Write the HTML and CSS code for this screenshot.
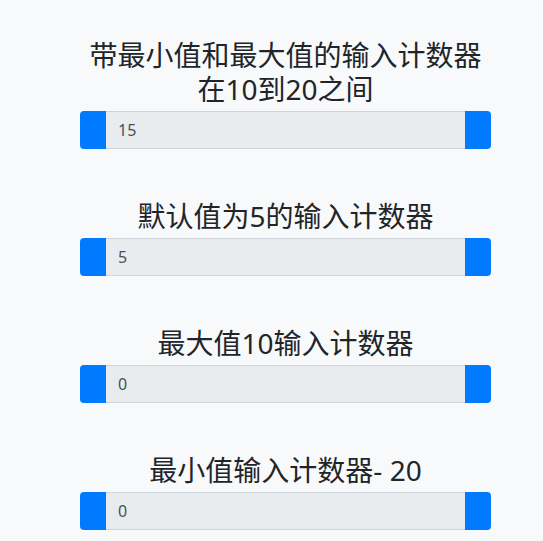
FILE: index.html
```html
<!DOCTYPE html>
<html lang="zh">
<head>
    <meta charset="UTF-8">
    <meta name="viewport" content="width=device-width, initial-scale=1.0">
    <title>输入计数器</title>
    <link rel="stylesheet" href="styles.css">
</head>
<body>
    <div class="container">
        <div class="counter">
            <h3>带最小值和最大值的输入计数器<br>在10到20之间</h3>
            <div class="input-group">
                <button class="btn-step btn-minus"></button>
                <input type="text" class="count-input" value="15" readonly>
                <button class="btn-step btn-plus"></button>
            </div>
        </div>
        <div class="counter">
            <h3>默认值为5的输入计数器</h3>
            <div class="input-group">
                <button class="btn-step btn-minus"></button>
                <input type="text" class="count-input" value="5" readonly>
                <button class="btn-step btn-plus"></button>
            </div>
        </div>
        <div class="counter">
            <h3>最大值10输入计数器</h3>
            <div class="input-group">
                <button class="btn-step btn-minus"></button>
                <input type="text" class="count-input" value="0" readonly>
                <button class="btn-step btn-plus"></button>
            </div>
        </div>
        <div class="counter">
            <h3>最小值输入计数器- 20</h3>
            <div class="input-group">
                <button class="btn-step btn-minus"></button>
                <input type="text" class="count-input" value="0" readonly>
                <button class="btn-step btn-plus"></button>
            </div>
        </div>
    </div>
</body>
</html>
```

FILE: styles.css
```css
body {
    font-family: "Noto Sans", "Noto Sans CJK SC", sans-serif;
    background-color: #f8f9fa;
    color: #212529;
    margin: 0;
}
.container {
    width: 411px;
    margin-left: 80px;
    padding-top: 36px;
}
.counter {
    margin-bottom: 47.4px;
}
h3 {
    font-size: 28px;
    font-weight: 400;
    line-height: 1.2;
    text-align: center;
    margin: 0 0 5px 0;
    padding-top: 3px;
}
.input-group {
    display: flex;
    height: 38px;
}
.btn-step {
    width: 26px;
    border: none;
    padding: 0;
    background-color: #007bff;
    cursor: pointer;
}
.btn-minus {
    border-radius: 4px 0 0 4px;
}
.btn-plus {
    border-radius: 0 4px 4px 0;
}
.count-input {
    flex: 1;
    min-width: 0;
    box-sizing: border-box;
    height: 38px;
    margin: 0;
    padding: 0 12px;
    border: 1px solid #ced4da;
    border-left: none;
    border-right: none;
    background-color: #e9ecef;
    color: #495057;
    font-family: "Noto Sans", sans-serif;
    font-size: 16px;
    outline: none;
}
```
